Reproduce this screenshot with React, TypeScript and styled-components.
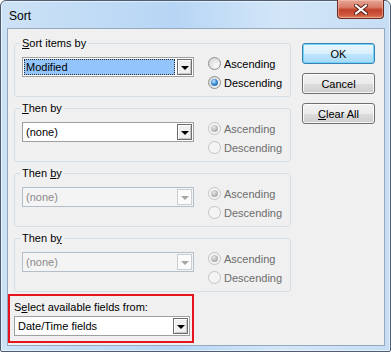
import React from "react"
import styled, { createGlobalStyle, css } from "styled-components"

const GlobalStyle = createGlobalStyle`
  html, body {
    margin: 0;
    padding: 0;
    background: #ffffff;
  }
  body {
    font-family: "Liberation Sans", Arial, sans-serif;
    font-size: 11px;
    color: #000;
  }
`

interface SortGroup {
  label: React.ReactNode
  value: string
  comboDisabled?: boolean
  radiosDisabled?: boolean
  ascending: boolean
  selected?: boolean
}

const groups: SortGroup[] = [
  { label: <><u>S</u>ort items by</>, value: "Modified", ascending: false, selected: true },
  { label: <><u>T</u>hen by</>, value: "(none)", radiosDisabled: true, ascending: true },
  { label: <>Then <u>b</u>y</>, value: "(none)", comboDisabled: true, radiosDisabled: true, ascending: true },
  { label: <>Then b<u>y</u></>, value: "(none)", comboDisabled: true, radiosDisabled: true, ascending: true },
]

const CloseIcon = () => (
  <svg width="14" height="11" viewBox="0 0 14 11">
    <path d="M2 1.5 L12 9.5 M12 1.5 L2 9.5" stroke="#5a1f17" strokeWidth="4" strokeLinecap="square" />
    <path d="M2 1.5 L12 9.5 M12 1.5 L2 9.5" stroke="#ffffff" strokeWidth="2" strokeLinecap="square" />
  </svg>
)

interface ComboProps {
  value: string
  width: number
  disabled?: boolean
  selected?: boolean
}

const ComboBox = ({ value, width, disabled, selected }: ComboProps) => (
  <Combo $disabled={disabled} style={{ width }}>
    <ComboField $selected={selected} $disabled={disabled}>{value}</ComboField>
    <DropButton $disabled={disabled}>
      <Arrow $disabled={disabled} />
    </DropButton>
  </Combo>
)

const RadioOption = (props: { label: string; checked: boolean; disabled?: boolean }) => (
  <RadioRow $disabled={props.disabled}>
    <Radio $checked={props.checked} $disabled={props.disabled} />
    {props.label}
  </RadioRow>
)

const App = () => {
  return (
    <>
      <GlobalStyle />
      <Window>
        <TitleBar>
          <Title>Sort</Title>
          <CloseButton>
            <CloseIcon />
          </CloseButton>
        </TitleBar>
        <Client>
          <Main>
            <Groups>
              {groups.map((g, i) => (
                <GroupBox key={i}>
                  <Legend>{g.label}</Legend>
                  <GroupRow>
                    <ComboBox
                      value={g.value}
                      width={172}
                      disabled={g.comboDisabled}
                      selected={g.selected}
                    />
                    <RadioColumn>
                      <RadioOption label="Ascending" checked={g.ascending} disabled={g.radiosDisabled} />
                      <RadioOption label="Descending" checked={!g.ascending} disabled={g.radiosDisabled} />
                    </RadioColumn>
                  </GroupRow>
                </GroupBox>
              ))}
            </Groups>
            <Buttons>
              <Button $default>OK</Button>
              <Button>Cancel</Button>
              <Button><u>C</u>lear All</Button>
            </Buttons>
          </Main>
          <FieldSource>
            <FieldLabel>S<u>e</u>lect available fields from:</FieldLabel>
            <ComboBox value="Date/Time fields" width={176} />
          </FieldSource>
        </Client>
      </Window>
    </>
  )
}

export default App

const Window = styled.div`
  width: 391px;
  height: 352px;
  box-sizing: border-box;
  display: flex;
  flex-direction: column;
  padding: 0 5px 5px 6px;
  border: 1px solid #4e5d70;
  border-radius: 6px 6px 2px 2px;
  background: linear-gradient(
    to right,
    #cde2f6 0%,
    #c2dcf5 20%,
    #b7d6f5 45%,
    #d3e6f8 72%,
    #c6ddf4 100%
  );
  box-shadow: inset 0 0 0 1px rgba(255, 255, 255, 0.55);
`

const TitleBar = styled.div`
  height: 27px;
  display: flex;
  justify-content: space-between;
  align-items: flex-start;
`

const Title = styled.div`
  padding: 8px 0 0 2px;
  font-size: 12px;
  color: #000;
`

const CloseButton = styled.div`
  width: 45px;
  height: 18px;
  margin-top: -1px;
  margin-right: 1px;
  display: flex;
  align-items: center;
  justify-content: center;
  border: 1px solid #6a2b22;
  border-top: none;
  border-radius: 0 0 4px 4px;
  background: linear-gradient(to bottom, #e6a595 0%, #d97e69 40%, #c2412b 55%, #cf5a3f 85%, #e08a66 100%);
  box-shadow: inset 0 0 0 1px rgba(255, 210, 200, 0.45);
`

const Client = styled.div`
  flex: 1;
  display: flex;
  flex-direction: column;
  border: 1px solid #94a8bf;
  background: #f0f0f0;
`

const Main = styled.div`
  display: flex;
  align-items: flex-start;
  gap: 11px;
  padding: 8px 8px 0 6px;
`

const Groups = styled.div`
  display: flex;
  flex-direction: column;
  gap: 5px;
`

const GroupBox = styled.fieldset`
  margin: 0;
  width: 277px;
  height: 60px;
  box-sizing: border-box;
  padding: 7px 7px 0 7px;
  border: 1px solid #d5dfe5;
  border-radius: 3px;
`

const Legend = styled.legend`
  padding: 0 2px;
  margin-left: -2px;
  line-height: 13px;
  font-size: 11px;
`

const GroupRow = styled.div`
  display: flex;
  align-items: flex-start;
  gap: 14px;
`

const RadioColumn = styled.div`
  display: flex;
  flex-direction: column;
  margin-top: -3px;
`

const RadioRow = styled.label<{ $disabled?: boolean }>`
  display: flex;
  align-items: center;
  gap: 3px;
  height: 19px;
  white-space: nowrap;
  color: ${(p) => (p.$disabled ? "#6d6d6d" : "#000")};
`

const Radio = styled.span<{ $checked?: boolean; $disabled?: boolean }>`
  position: relative;
  width: 13px;
  height: 13px;
  box-sizing: border-box;
  border-radius: 50%;
  border: 1px solid ${(p) => (p.$disabled ? "#c3c3c3" : "#8e8f8f")};
  background: ${(p) =>
    p.$disabled
      ? "#f4f4f4"
      : "radial-gradient(circle at 70% 70%, #fbfbfb 0%, #e6e6e6 50%, #cfcfcf 100%)"};

  ${(p) =>
    p.$checked &&
    css`
      &::after {
        content: "";
        position: absolute;
        left: 2px;
        top: 2px;
        width: 7px;
        height: 7px;
        border-radius: 50%;
        background: ${p.$disabled
          ? "radial-gradient(circle at 40% 35%, #e8e8e8 0%, #b3b3b3 60%, #9a9a9a 100%)"
          : "radial-gradient(circle at 40% 35%, #cfe9ff 0%, #3d8fd8 45%, #1b4f86 100%)"};
      }
    `}
`

const Combo = styled.div<{ $disabled?: boolean }>`
  height: 20px;
  box-sizing: border-box;
  display: flex;
  align-items: stretch;
  padding: 1px;
  border: 1px solid ${(p) => (p.$disabled ? "#b5bfca" : "#a0a0a0")};
  background: ${(p) => (p.$disabled ? "#f4f4f4" : "#ffffff")};
`

const ComboField = styled.div<{ $selected?: boolean; $disabled?: boolean }>`
  flex: 1;
  display: flex;
  align-items: center;
  padding-left: 2px;
  margin-right: 2px;
  color: ${(p) => (p.$disabled ? "#8a8a8a" : "#000")};
  ${(p) =>
    p.$selected &&
    css`
      background: #93c5fc;
      outline: 1px dotted #2a2a2a;
      outline-offset: -1px;
    `}
`

const DropButton = styled.div<{ $disabled?: boolean }>`
  width: 15px;
  box-sizing: border-box;
  display: flex;
  align-items: center;
  justify-content: center;
  border: 1px solid ${(p) => (p.$disabled ? "#c9ced4" : "#6e6e6e")};
  background: ${(p) => (p.$disabled ? "#fbfbfb" : "#f0f0f0")};
  box-shadow: ${(p) => (p.$disabled ? "none" : "inset 1px 1px 0 #ffffff, inset -1px -1px 0 #c8c8c8")};
`

const Arrow = styled.span<{ $disabled?: boolean }>`
  width: 0;
  height: 0;
  border-left: 4px solid transparent;
  border-right: 4px solid transparent;
  border-top: 4px solid ${(p) => (p.$disabled ? "#a6a6a6" : "#000")};
  margin-top: 1px;
`

const Buttons = styled.div`
  display: flex;
  flex-direction: column;
  gap: 9px;
  margin-top: 6px;
`

const Button = styled.div<{ $default?: boolean }>`
  width: 73px;
  height: 21px;
  box-sizing: border-box;
  display: flex;
  align-items: center;
  justify-content: center;
  border-radius: 3px;
  border: 1px solid ${(p) => (p.$default ? "#3c7fb1" : "#707070")};
  background: ${(p) =>
    p.$default
      ? "linear-gradient(to bottom, #eaf6fd 0%, #d9f0fc 50%, #bee6fd 51%, #a7d9f5 100%)"
      : "linear-gradient(to bottom, #f2f2f2 0%, #ebebeb 50%, #dddddd 51%, #cfcfcf 100%)"};
  box-shadow: inset 0 0 0 1px ${(p) => (p.$default ? "#6fd5fd" : "rgba(255,255,255,0.8)")};
`

const FieldSource = styled.div`
  width: 186px;
  box-sizing: border-box;
  margin-top: 2px;
  padding: 5px 2px 5px 4px;
  border: 2px solid #e6141b;
`

const FieldLabel = styled.div`
  line-height: 13px;
  margin-bottom: 2px;
`
